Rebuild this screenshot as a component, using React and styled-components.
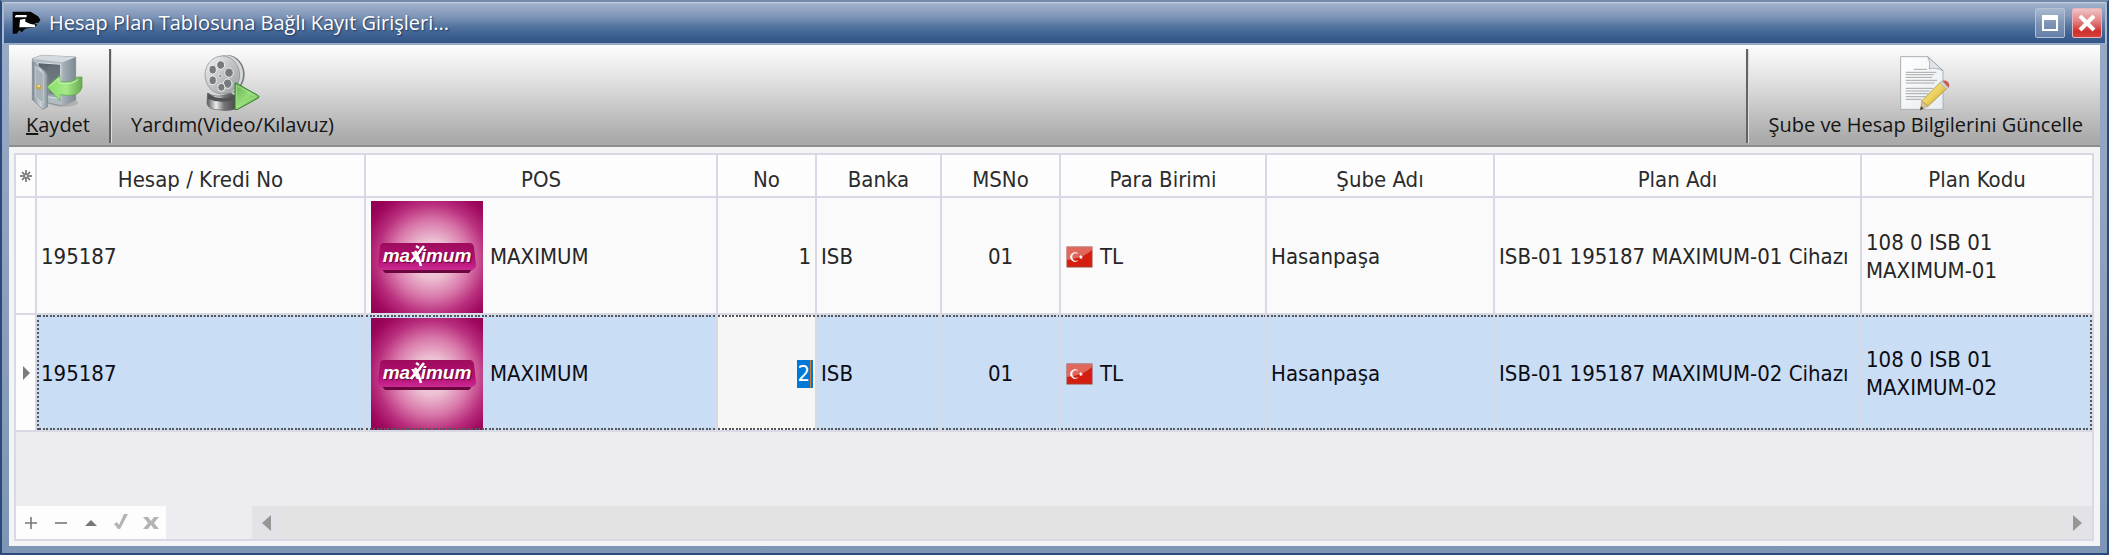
import React, { useEffect, useRef } from "react";
import styled, { createGlobalStyle, css } from "styled-components";

const LINE = "#d9d9e5";
const UI_FONT = '"Open Sans", "Noto Sans", sans-serif';
const GRID_FONT = '"DejaVu Sans Condensed", "DejaVu Sans", sans-serif';

const GlobalStyle = createGlobalStyle`
  * { box-sizing: border-box; }
  body { margin: 0; background: #2b4a7a; }
  button, input { font: inherit; color: inherit; border: 0; margin: 0; padding: 0; background: none; }
`;

const Window = styled.main`
  min-height: 100vh;
  display: flex;
  flex-direction: column;
  border: 2px solid #2b4a7a;
  border-top-color: #7289aa;
  background: linear-gradient(#9aabc5, #7f95b5);
  font-family: ${UI_FONT};
  font-size: 20px;
  color: #141414;
`;

const TitleBar = styled.header`
  display: flex;
  align-items: center;
  gap: 8px;
  height: 43px;
  padding: 0 3px 0 8px;
  border-left: 2px solid #a9b9cf;
  border-right: 2px solid #a9b9cf;
  border-bottom: 2px solid #9aabc5;
  background: linear-gradient(#c9d2e2 0, #9fb0c9 2px, #8197b9 14px, #55759f 24px, #3c5f92 34px, #335686 100%);
`;

const Title = styled.h1`
  flex: 1;
  margin: 0;
  font-size: 20px;
  line-height: 28px;
  font-weight: 400;
  color: #fff;
  text-shadow: 1px 1px 2px #1d3357;
`;

const CaptionButtons = styled.div`
  display: flex;
  gap: 7px;
`;

const CaptionButton = styled.button`
  display: flex;
  align-items: center;
  justify-content: center;
  width: 30px;
  height: 30px;
  border: 1px solid ${(p) => (p.$close ? "#e8b4b8" : "#b4c1d5")};
  border-radius: 2px;
  background: ${(p) =>
    p.$close
      ? "linear-gradient(#f0c4c6, #e27f80 45%, #cf2f2c 80%, #d6423c)"
      : "linear-gradient(#a9b8cf, #7f95b6 50%, #6480a8)"};
`;

const Client = styled.div`
  flex: 1;
  display: flex;
  flex-direction: column;
  margin: 0 7px 7px;
  background: #f3f4f6;
`;

const Toolbar = styled.div`
  display: flex;
  height: 102px;
  padding-top: 4px;
  border-bottom: 2px solid #8e8e8e;
  background: linear-gradient(#fdfdfd, #e6e6e6 30%, #cacaca 60%, #acacac 92%, #a9a9a9);
`;

const ToolButton = styled.button`
  display: flex;
  flex-direction: column;
  align-items: center;
  padding: 5px 17px 0;
  line-height: 28px;
  white-space: nowrap;
`;

const IconBox = styled.span`
  display: flex;
  height: 57px;
  svg { display: block; }
`;

const Separator = styled.div`
  width: 3px;
  margin: 0 2px 2px;
  border-left: 2px solid #636363;
  background: #dcdcdc;
`;

const Spacer = styled.div`
  flex: 1;
`;

const Grid = styled.section`
  flex: 1;
  display: flex;
  flex-direction: column;
  justify-content: space-between;
  margin: 6px 6px 5px 5px;
  border: 2px solid ${LINE};
  background: #edecf1;
  font-family: ${GRID_FONT};
  font-size: 22px;
  line-height: 28px;
`;

const Table = styled.table`
  width: 100%;
  table-layout: fixed;
  border-collapse: separate;
  border-spacing: 0;
`;

const Col = styled.col`
  width: ${(p) => (p.$w ? `${p.$w}px` : "auto")};
`;

const HeadCell = styled.th`
  height: 43px;
  padding: 8px 4px 0;
  border: solid ${LINE};
  border-width: 0 2px 2px 0;
  background: #fdfdfd;
  font-weight: 400;
  white-space: nowrap;
  color: #2c2c2c;
  &:last-child { border-right: 0; }
`;

const dots = (dir) =>
  `repeating-linear-gradient(${dir}, #55565a 0 2px, transparent 2px 4px, #55565a 4px 6px, transparent 6px 7px)`;

const focusFrame = css`
  &::after {
    content: "";
    position: absolute;
    inset: 0;
    pointer-events: none;
    background:
      ${dots("90deg")} top / 100% 2px no-repeat,
      ${dots("90deg")} bottom / 100% 2px no-repeat;
  }
  &:nth-child(2)::after { border-left: 2px dotted #55565a; }
  &:last-child::after { border-right: 2px dotted #55565a; }
`;

const Cell = styled.td`
  position: relative;
  height: 117px;
  padding: 2px 4px 0;
  border: solid ${LINE};
  border-width: 0 2px 2px 0;
  text-align: ${(p) => p.$align || "left"};
  background: ${(p) => (p.$editing ? "#f6f6f6" : p.$selected ? "#c9ddf4" : "#fafafa")};
  color: ${(p) => (p.$selected ? "#0c0c14" : "#262626")};
  &:last-child { border-right: 0; }
  ${(p) => p.$selected && focusFrame}
`;

const Indicator = styled.td`
  padding: 0;
  border: solid ${LINE};
  border-width: 0 2px 2px 0;
  background: #fdfdfd;
  svg { display: block; margin: auto; }
`;

const StarCell = styled(HeadCell)`
  padding: 0;
  svg { display: block; margin: auto; }
`;

const Media = styled.span`
  display: flex;
  align-items: center;
  gap: 7px;
  padding-left: 1px;
`;

const Editor = styled.span`
  display: flex;
  justify-content: flex-end;
`;

const NumberInput = styled.input`
  width: 100%;
  min-width: 0;
  height: 28px;
  text-align: right;
  outline: none;
  &::selection { background: #0078d7; color: #fff; }
`;

const Caret = styled.span`
  flex: none;
  width: 3px;
  height: 28px;
  margin-right: -2px;
  background: #c9803f;
  border-right: 2px solid #0078d7;
`;

const Footer = styled.div`
  display: flex;
  height: 33px;
`;

const Navigator = styled.div`
  display: flex;
  margin-right: 86px;
  background: #fdfdfd;
`;

const NavButton = styled.button`
  display: flex;
  align-items: center;
  justify-content: center;
  width: 30px;
  height: 33px;
`;

const ScrollBar = styled.div`
  flex: 1;
  display: flex;
  justify-content: space-between;
  background: #e3e3e3;
`;

const ScrollButton = styled(NavButton)`
  background: #e2e2e7;
`;

const AppIcon = () => (
  <svg width="29" height="24" viewBox="36 40 87 72" aria-hidden="true">
    <path d="M38 42 H92 L104 50 L114 56 L121 66 L116 75 L104 76 L112 82 L100 90 L80 92 L72 96 L66 104 L58 98 L50 108 L38 108 Z" fill="#050505" />
    <path d="M45 56 L48 52 H80 V59 H45 Z M60 66 L76 63 V72 L92 79 L106 81 L104 89 H58 Z" fill="#fff" />
  </svg>
);

const SafeIcon = () => (
  <svg width="53" height="57" viewBox="97 160 159 171" aria-hidden="true">
    <defs>
      <linearGradient id="safeSide" x1="0" x2="1"><stop offset="0" stopColor="#a8b2ba" /><stop offset="1" stopColor="#7d8991" /></linearGradient>
      <linearGradient id="safeDoor" x1="0" x2="1"><stop offset="0" stopColor="#8c979f" /><stop offset=".5" stopColor="#ccd4d9" /><stop offset="1" stopColor="#87929a" /></linearGradient>
      <linearGradient id="safeArrow" x1="0" x2="1"><stop offset="0" stopColor="#86dd68" /><stop offset=".55" stopColor="#a5ea88" /><stop offset="1" stopColor="#68a952" /></linearGradient>
      <linearGradient id="safeIn" x1="0" y1="0" x2="0" y2="1"><stop offset="0" stopColor="#555f66" /><stop offset="1" stopColor="#a4afb6" /></linearGradient>
    </defs>
    <ellipse cx="194" cy="306" rx="44" ry="12" fill="#000" opacity=".13" />
    <path d="M101 174 L128 164 L231 169 L231 298 L190 315 L101 298 Z" fill="#b2bcc3" stroke="#78838b" strokeWidth="2" />
    <path d="M191 185 L231 169 V298 L190 315 Z" fill="url(#safeSide)" />
    <path d="M101 174 L128 164 L231 169 L191 185 Z" fill="#d4dbdf" />
    <path d="M118 186 L186 191 V294 L118 284 Z" fill="url(#safeIn)" stroke="#dbe1e4" strokeWidth="3" />
    <path d="M150 193 L182 195 V284 L150 280 Z" fill="#69747b" opacity=".7" />
    <path d="M103 183 L139 212 L147 224 V318 L132 326 L103 298 Z" fill="url(#safeDoor)" stroke="#727d85" strokeWidth="2" />
    <path d="M110 199 L134 219 V307 L110 289 Z" fill="#a7b2b9" stroke="#cdd5d9" strokeWidth="2" />
    <circle cx="120" cy="259" r="8" fill="#c3a64f" /><circle cx="120" cy="256" r="4" fill="#f3df9a" />
    <path d="M145 259 L184 224 V243 Q224 249 235 229 L250 229 V261 Q242 292 184 282 V300 Z" fill="url(#safeArrow)" stroke="#57a83f" strokeWidth="2" strokeLinejoin="round" />
    <path d="M151 258 L181 232 V247 Q222 254 239 236" fill="none" stroke="#c6f6b1" strokeWidth="3" />
  </svg>
);

const FilmIcon = () => (
  <svg width="58" height="57" viewBox="620 160 174 171" aria-hidden="true">
    <defs>
      <linearGradient id="reel" x1="0" y1="0" x2="1" y2="1"><stop offset="0" stopColor="#f4f5f5" /><stop offset=".5" stopColor="#bfc3c5" /><stop offset="1" stopColor="#9b9fa2" /></linearGradient>
      <linearGradient id="strip" x1="0" x2="1"><stop offset="0" stopColor="#555" /><stop offset=".3" stopColor="#eee" /><stop offset=".55" stopColor="#777" /><stop offset="1" stopColor="#444" /></linearGradient>
      <linearGradient id="play" x1="0" x2="1" y2="1"><stop offset="0" stopColor="#64ad51" /><stop offset=".5" stopColor="#96dc78" /><stop offset="1" stopColor="#59b544" /></linearGradient>
    </defs>
    <path d="M634 277 Q660 296 702 277 L724 290 V324 Q690 334 652 326 Q630 320 632 303 Z" fill="url(#strip)" stroke="#666" strokeWidth="2" />
    <path d="M634 278 Q674 306 722 280 L720 296 Q676 312 634 294 Z" fill="#505355" />
    <ellipse cx="692" cy="221" rx="53" ry="58" fill="#777b7e" />
    <ellipse cx="688" cy="221" rx="52" ry="57" fill="#d5d8d9" />
    <ellipse cx="678" cy="223" rx="52" ry="57" fill="url(#reel)" stroke="#85898c" strokeWidth="2" />
    <g fill="#777b7e" stroke="#f2f3f3" strokeWidth="3">
      <ellipse cx="673" cy="193" rx="12" ry="13" /><ellipse cx="698" cy="216" rx="13" ry="14" />
      <ellipse cx="694" cy="249" rx="13" ry="14" /><ellipse cx="675" cy="260" rx="11" ry="12" />
      <ellipse cx="649" cy="239" rx="11" ry="13" /><ellipse cx="649" cy="207" rx="11" ry="13" />
    </g>
    <circle cx="672" cy="226" r="5" fill="#8d9194" stroke="#eee" strokeWidth="2" />
    <path d="M716 248 Q718 246 721 248 L786 285 Q790 288 786 292 L722 327 Q716 329 716 323 Z" fill="url(#play)" stroke="#347c28" strokeWidth="3" />
    <path d="M720 254 L778 287 L722 319 Z" fill="none" stroke="#b3e69e" strokeWidth="2" />
  </svg>
);

const NoteIcon = () => (
  <svg width="53" height="57" viewBox="794 161 159 171" aria-hidden="true">
    <defs>
      <linearGradient id="paper" x1="0" y1="0" x2="1" y2="1"><stop offset="0" stopColor="#fff" /><stop offset="1" stopColor="#e8edf1" /></linearGradient>
      <linearGradient id="pencil" x1="0" y1="0" x2="1" y2="1"><stop offset="0" stopColor="#f9ec93" /><stop offset=".5" stopColor="#ecd260" /><stop offset="1" stopColor="#b28e2c" /></linearGradient>
    </defs>
    <path d="M799 169 H880 L926 211 V327 H799 Z" fill="url(#paper)" stroke="#a9b0b5" strokeWidth="3" />
    <path d="M880 169 L926 211 Q902 200 885 206 Q890 186 880 169 Z" fill="#dfe5ea" stroke="#8e9599" strokeWidth="2" />
    <g stroke="#a8a8a8" strokeWidth="3">
      <path d="M838 207 H878 M814 216 H906 M814 223 H898 M814 231 H893 M814 240 H908 M814 248 H900 M814 264 H896 M814 272 H886 M814 280 H882 M814 289 H874 M814 297 H862" />
    </g>
    <path d="M862 302 L918 246 L938 264 L881 318 Z" fill="url(#pencil)" stroke="#9d832f" strokeWidth="2" />
    <path d="M862 302 L881 318 L858 330 Z" fill="#d9c295" stroke="#8b7642" strokeWidth="1" />
    <path d="M860 318 L868 324 L857 330 Z" fill="#3c3c3c" />
    <path d="M916 248 L924 240 L944 259 L936 266 Z" fill="#cdd2d6" stroke="#8f9598" strokeWidth="1" />
    <path d="M924 242 Q932 238 940 244 Q948 252 943 262 Z" fill="#cc5a4a" />
  </svg>
);

const LogoText = styled.text`
  font: italic 700 19px "Liberation Sans", sans-serif;
  text-anchor: middle;
  text-shadow: 1px 1px 1px #5f0838;
`;

const MaximumLogo = () => (
  <svg width="112" height="112" viewBox="0 0 112 112" role="img" aria-label="maximum">
    <defs>
      <radialGradient id="glow" cx="54%" cy="52%" r="68%">
        <stop offset="0" stopColor="#f8dde6" /><stop offset=".25" stopColor="#ecbfd2" /><stop offset=".5" stopColor="#d979ab" />
        <stop offset=".72" stopColor="#b92f7d" /><stop offset=".9" stopColor="#a00a60" /><stop offset="1" stopColor="#930253" />
      </radialGradient>
      <linearGradient id="plate" x1="0" y1="0" x2="0" y2="1"><stop offset="0" stopColor="#9d0c5c" /><stop offset=".6" stopColor="#b40f73" /><stop offset="1" stopColor="#cb2a93" /></linearGradient>
    </defs>
    <rect width="112" height="112" fill="url(#glow)" />
    <path d="M8 65 L14 72 H98 L104 65 Z" fill="#6a063d" />
    <path d="M13 42 H99 Q102 42 103 46 L105 64 Q105 69 100 69 H12 Q7 69 7 64 L9 46 Q9 42 13 42 Z" fill="url(#plate)" />
    <LogoText x="56" y="61" fill="#fff">maximum</LogoText>
    <path d="M40 61 L53 45 M44 50 Q47 55 50 65" fill="none" stroke="#fff" strokeWidth="2.6" />
    <path d="M45 45 l3 2" stroke="#fff" strokeWidth="2.4" />
  </svg>
);

const TurkishFlag = () => (
  <svg width="27" height="22" viewBox="0 0 27 22" aria-hidden="true">
    <rect x="1" y="1" width="25" height="20" fill="#d31e10" stroke="#a34237" strokeWidth="1" />
    <path d="M1 1 H26 V4 Q18 12 1 14 Z" fill="#fff" opacity=".32" />
    <path d="M12 7.5 A4.6 4.6 0 1 0 12 14.5 A4 4 0 1 1 12 7.5 Z" fill="#fff" stroke="#fff" strokeWidth=".3" />
    <path d="M12.5 11 L14 10.3 L14.4 8.8 L15.4 10.2 L17 10 L15.9 11.3 L16.6 12.8 L15 12.2 L13.8 13.2 L14 11.6 Z" fill="#fff" />
  </svg>
);

const StarGlyph = () => (
  <svg width="14" height="14" viewBox="0 0 14 14" aria-hidden="true">
    <path d="M7 1 V13 M1 7 H13 M3 3 L11 11 M11 3 L3 11" stroke="#666" strokeWidth="1.5" fill="none" />
    <circle cx="7" cy="7" r="2" fill="#ddd" stroke="#666" />
  </svg>
);

const navItems = [
  ["Ekle", <path d="M9 3 V15 M3 9 H15" stroke="#777" strokeWidth="1.6" />],
  ["Sil", <path d="M3 9 H15" stroke="#777" strokeWidth="1.6" />],
  ["Düzenle", <path d="M3 12 L9 6 L15 12 Z" fill="#777" />],
  ["Onayla", <path d="M2 10 L5 8 L7 11 L12 0 L16 0 L8 15 L6 15 Z" fill="#b4b4b4" />],
  ["İptal", <path d="M1 3 H6 L9 7 L12 3 H17 L12 9 L17 15 H12 L9 11 L6 15 H1 L6 9 Z" fill="#b4b4b4" />],
];

const columns = [
  ["Hesap / Kredi No", 329],
  ["POS", 352],
  ["No", 99],
  ["Banka", 125],
  ["MSNo", 119],
  ["Para Birimi", 206],
  ["Şube Adı", 228],
  ["Plan Adı", 367],
  ["Plan Kodu", 0],
];

const rows = [
  { no: "1", suffix: "01" },
  { no: "2", suffix: "02", selected: true },
];

function NumberEditor({ value }) {
  const ref = useRef(null);
  useEffect(() => {
    ref.current.focus();
    ref.current.select();
  }, []);
  return (
    <Editor>
      <NumberInput ref={ref} aria-label="No" defaultValue={value} />
      <Caret />
    </Editor>
  );
}

function Row({ no, suffix, selected }) {
  return (
    <tr>
      <Indicator>
        {selected && (
          <svg width="8" height="14" viewBox="0 0 8 14" aria-hidden="true">
            <path d="M1 0 L8 7 L1 14 Z" fill="#7c7c7c" />
          </svg>
        )}
      </Indicator>
      <Cell $selected={selected}>195187</Cell>
      <Cell $selected={selected}>
        <Media>
          <MaximumLogo />
          MAXIMUM
        </Media>
      </Cell>
      <Cell $selected={selected} $editing={selected} $align="right">
        {selected ? <NumberEditor value={no} /> : no}
      </Cell>
      <Cell $selected={selected}>ISB</Cell>
      <Cell $selected={selected} $align="center">01</Cell>
      <Cell $selected={selected}>
        <Media>
          <TurkishFlag />
          TL
        </Media>
      </Cell>
      <Cell $selected={selected}>Hasanpaşa</Cell>
      <Cell $selected={selected}>ISB-01 195187 MAXIMUM-{suffix} Cihazı</Cell>
      <Cell $selected={selected}>
        108 0 ISB 01
        <br />
        MAXIMUM-{suffix}
      </Cell>
    </tr>
  );
}

export default function App() {
  return (
    <>
      <GlobalStyle />
      <Window>
        <TitleBar>
          <AppIcon />
          <Title>Hesap Plan Tablosuna Bağlı Kayıt Girişleri...</Title>
          <CaptionButtons>
            <CaptionButton aria-label="Ekranı kapla">
              <svg width="16" height="16" viewBox="0 0 16 16" aria-hidden="true">
                <path d="M1 1 H15 V15 H1 Z" fill="none" stroke="#fff" strokeWidth="2" />
                <path d="M1 1 H15 V5 H1 Z" fill="#fff" />
              </svg>
            </CaptionButton>
            <CaptionButton $close aria-label="Kapat">
              <svg width="18" height="18" viewBox="0 0 18 18" aria-hidden="true">
                <path d="M2 2 L16 16 M16 2 L2 16" stroke="#fff" strokeWidth="4" />
              </svg>
            </CaptionButton>
          </CaptionButtons>
        </TitleBar>
        <Client>
          <Toolbar>
            <ToolButton>
              <IconBox><SafeIcon /></IconBox>
              <span><u>K</u>aydet</span>
            </ToolButton>
            <Separator />
            <ToolButton>
              <IconBox><FilmIcon /></IconBox>
              Yardım(Video/Kılavuz)
            </ToolButton>
            <Spacer />
            <Separator />
            <ToolButton>
              <IconBox><NoteIcon /></IconBox>
              Şube ve Hesap Bilgilerini Güncelle
            </ToolButton>
          </Toolbar>
          <Grid>
            <Table>
              <colgroup>
                <Col $w={21} />
                {columns.map(([name, width]) => <Col key={name} $w={width} />)}
              </colgroup>
              <thead>
                <tr>
                  <StarCell><StarGlyph /></StarCell>
                  {columns.map(([name]) => <HeadCell key={name} scope="col">{name}</HeadCell>)}
                </tr>
              </thead>
              <tbody>
                {rows.map((row) => <Row key={row.no} {...row} />)}
              </tbody>
            </Table>
            <Footer>
              <Navigator>
                {navItems.map(([label, glyph]) => (
                  <NavButton key={label} aria-label={label}>
                    <svg width="18" height="18" viewBox="0 0 18 18" fill="none" aria-hidden="true">{glyph}</svg>
                  </NavButton>
                ))}
              </Navigator>
              <ScrollBar>
                <ScrollButton aria-label="Sola kaydır">
                  <svg width="10" height="16" viewBox="0 0 10 16" aria-hidden="true"><path d="M9 0 V16 L0 8 Z" fill="#969696" /></svg>
                </ScrollButton>
                <ScrollButton aria-label="Sağa kaydır">
                  <svg width="10" height="16" viewBox="0 0 10 16" aria-hidden="true"><path d="M1 0 V16 L10 8 Z" fill="#969696" /></svg>
                </ScrollButton>
              </ScrollBar>
            </Footer>
          </Grid>
        </Client>
      </Window>
    </>
  );
}
